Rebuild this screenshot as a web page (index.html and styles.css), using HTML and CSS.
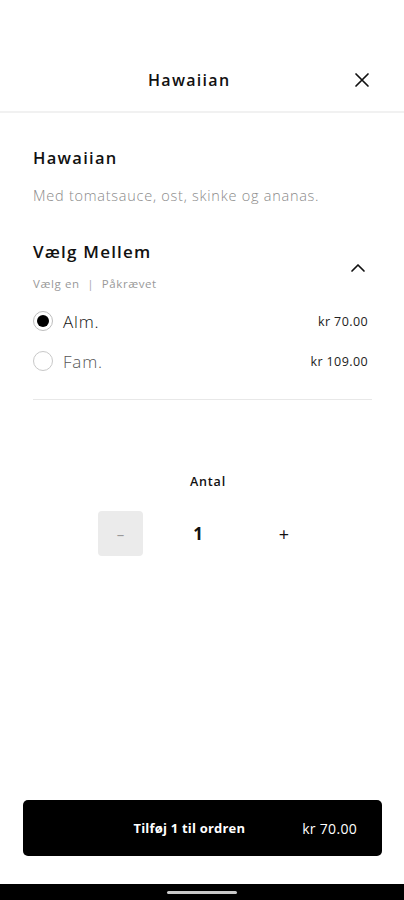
FILE: index.html
```html
<!DOCTYPE html>
<html lang="da">
<head>
<meta charset="utf-8">
<title>Hawaiian</title>
<link rel="stylesheet" href="styles.css">
</head>
<body>
<div class="screen">
  <div class="status"></div>
  <header class="topbar">
    <div class="topbar-title">Hawaiian</div>
    <button class="close" aria-label="Luk">
      <svg width="16" height="16" viewBox="0 0 16 16"><path d="M2 2 L14 14 M14 2 L2 14" stroke="#111" stroke-width="1.7" stroke-linecap="round" fill="none"/></svg>
    </button>
  </header>
  <main class="content">
    <h1 class="item-name">Hawaiian</h1>
    <p class="item-desc">Med tomatsauce, ost, skinke og ananas.</p>

    <section class="group">
      <div class="group-head">
        <div>
          <h2 class="group-title">Vælg Mellem</h2>
          <div class="group-sub">Vælg en <span class="sep">|</span> Påkrævet</div>
        </div>
        <svg class="chev" width="16" height="10" viewBox="0 0 16 10"><path d="M2 8 L8 2 L14 8" stroke="#111" stroke-width="1.7" fill="none" stroke-linecap="round" stroke-linejoin="round"/></svg>
      </div>
      <div class="options">
        <div class="option">
          <span class="radio checked"></span>
          <span class="opt-name">Alm.</span>
          <span class="opt-price">kr 70.00</span>
        </div>
        <div class="option">
          <span class="radio"></span>
          <span class="opt-name muted">Fam.</span>
          <span class="opt-price">kr 109.00</span>
        </div>
      </div>
    </section>

    <section class="qty">
      <div class="qty-label">Antal</div>
      <div class="qty-row">
        <button class="qty-btn minus">–</button>
        <span class="qty-val">1</span>
        <button class="qty-btn plus">+</button>
      </div>
    </section>
  </main>
  <div class="footer">
    <button class="add-btn"><span class="add-text">Tilføj 1 til ordren</span><span class="add-price">kr 70.00</span></button>
  </div>
  <div class="navbar"><span class="pill"></span></div>
</div>
</body>
</html>
```
FILE: styles.css
```css
* { box-sizing: border-box; }
html, body { margin: 0; padding: 0; background: #fff; }
body { font-family: "Open Sans", "Noto Sans", sans-serif; color: #111; }
.screen { width: 404px; height: 900px; display: flex; flex-direction: column; }
.status { height: 50px; }
.topbar { height: 63px; display: flex; align-items: center; justify-content: space-between; border-bottom: 2px solid #f1f1f1; padding: 0 34px 2px 148px; }
.topbar-title { font-size: 16px; font-weight: 600; letter-spacing: 1.3px; line-height: 22px; }
.close { background: none; border: 0; padding: 0; width: 16px; height: 16px; display: block; }
.close svg { display: block; }
.content { flex: 1; padding: 0 32px 0 33px; }
.item-name { margin: 34px 0 0; font-size: 16.5px; font-weight: 600; letter-spacing: 1.3px; line-height: 22px; }
.item-desc { margin: 17px 0 0; font-size: 14.5px; font-weight: 300; color: #8a8a8a; line-height: 20px; letter-spacing: 0.75px; }
.group { margin-top: 35px; border-bottom: 1px solid #e8e8e8; padding-bottom: 18px; }
.group-head { display: flex; justify-content: space-between; align-items: flex-start; }
.group-title { margin: 0; font-size: 17px; font-weight: 600; line-height: 22px; letter-spacing: 1.2px; }
.group-sub { margin-top: 14px; font-size: 11.5px; color: #999; font-weight: 400; line-height: 14px; letter-spacing: 0.6px; }
.sep { margin: 0 4px; color: #aaa; }
.chev { margin-top: 22px; margin-right: 6px; }
.options { margin-top: 10px; }
.option { display: flex; align-items: center; height: 40px; }
.radio { width: 20px; height: 20px; border-radius: 50%; border: 1.5px solid #c8c8c8; margin-right: 10px; position: relative; flex: none; }
.radio.checked { border-color: #bdbdbd; }
.radio.checked::after { content: ""; position: absolute; left: 2.5px; top: 2.5px; width: 12px; height: 12px; border-radius: 50%; background: #000; }
.opt-name { font-size: 17px; font-weight: 300; flex: 1; color: #111; letter-spacing: 0.8px; }
.opt-name.muted { color: #555; }
.opt-price { font-size: 12.5px; color: #222; margin-right: 4px; letter-spacing: 0.4px; }
.qty { margin-top: 73px; display: flex; flex-direction: column; align-items: center; }
.qty-label { font-size: 12.5px; font-weight: 600; letter-spacing: 0.8px; margin-left: 11px; }
.qty-row { margin-top: 21px; display: grid; grid-template-columns: 45px 110px 62px; align-items: center; align-self: flex-start; margin-left: 65px; }
.qty-btn { width: 45px; height: 45px; border: 0; border-radius: 4px; background: transparent; font-family: inherit; font-size: 18px; color: #111; padding: 0; }
.qty-btn.plus { justify-self: center; }
.qty-btn.minus { background: #ebebeb; color: #999; font-size: 15px; }
.qty-val { font-size: 17px; font-weight: 700; text-align: center; }
.footer { padding: 0 22px 28px 23px; }
.add-btn { width: 100%; height: 56px; background: #000; color: #fff; border: 0; border-radius: 5px; display: flex; align-items: center; justify-content: flex-end; padding: 0 25px 0 0; font-family: inherit; }
.add-text { font-size: 13px; font-weight: 700; margin-right: 57px; letter-spacing: 0.2px; }
.add-price { font-size: 14px; font-weight: 400; letter-spacing: 0.3px; }
.navbar { height: 16px; background: #000; display: flex; justify-content: center; align-items: center; }
.pill { width: 70px; height: 3px; border-radius: 2px; background: #c9c9c9; }
```
